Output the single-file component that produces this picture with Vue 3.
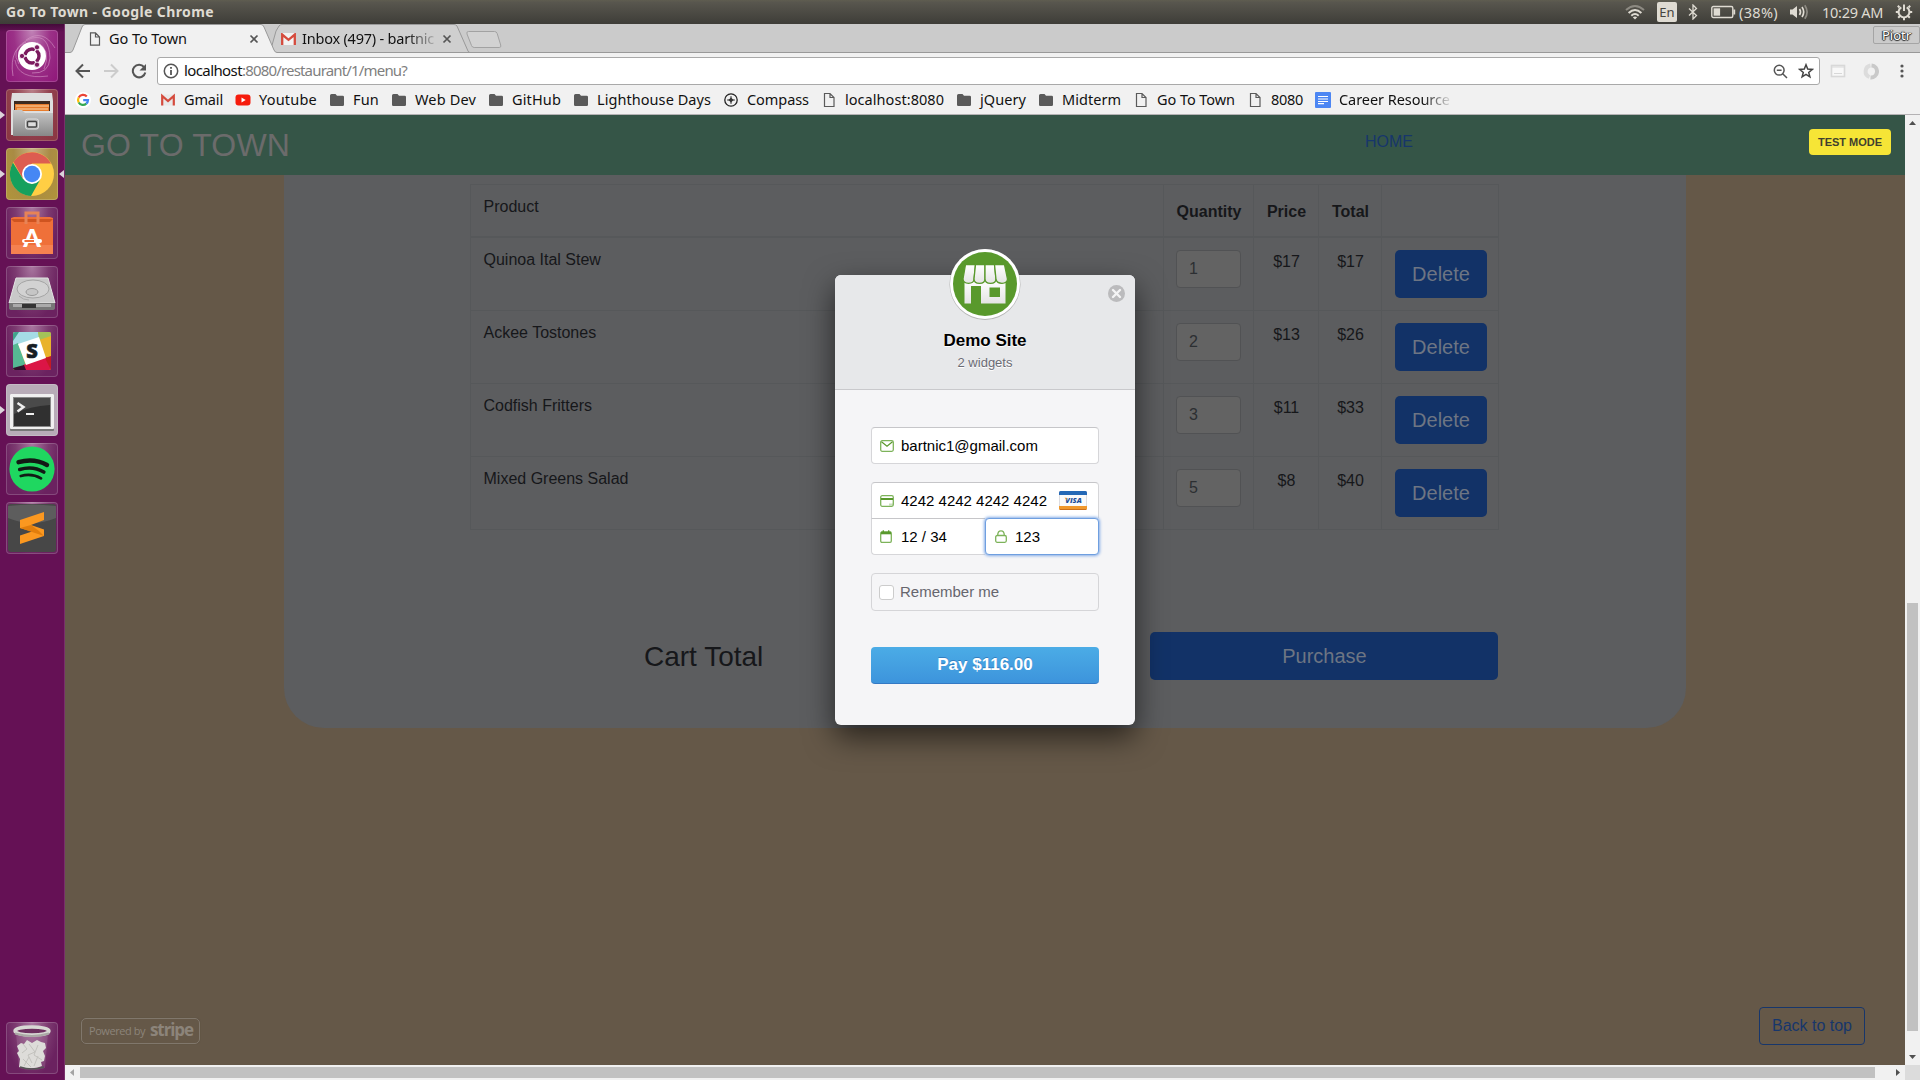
<script setup>
const vFit = {
  mounted(el, { value }) {
    const extra = value - el.getBoundingClientRect().width
    el.style.letterSpacing = extra / el.textContent.length + 'px'
  },
}

const launchers = [
  { id: 'dash' },
  { id: 'files', running: true },
  { id: 'chrome', running: true, focused: true },
  { id: 'software' },
  { id: 'disk' },
  { id: 'slack' },
  { id: 'terminal', running: true },
  { id: 'spotify' },
  { id: 'sublime' },
]

const bookmarks = [
  { icon: 'google', label: 'Google', width: 49 },
  { icon: 'gmail', label: 'Gmail', width: 39 },
  { icon: 'youtube', label: 'Youtube', width: 58 },
  { icon: 'folder', label: 'Fun', width: 26 },
  { icon: 'folder', label: 'Web Dev', width: 61 },
  { icon: 'folder', label: 'GitHub', width: 49 },
  { icon: 'folder', label: 'Lighthouse Days', width: 114 },
  { icon: 'compass', label: 'Compass', width: 62 },
  { icon: 'page', label: 'localhost:8080', width: 99 },
  { icon: 'folder', label: 'jQuery', width: 46 },
  { icon: 'folder', label: 'Midterm', width: 59 },
  { icon: 'page', label: 'Go To Town', width: 78 },
  { icon: 'page', label: '8080', width: 32 },
  { icon: 'doc', label: 'Career Resource', width: 111, faded: true },
]

const items = [
  { name: 'Quinoa Ital Stew', quantity: 1, price: 17 },
  { name: 'Ackee Tostones', quantity: 2, price: 13 },
  { name: 'Codfish Fritters', quantity: 3, price: 11 },
  { name: 'Mixed Greens Salad', quantity: 5, price: 8 },
]
</script>

<template>
  <div class="desktop">
    <header class="panel">
      <span v-fit="208" class="panel-title">Go To Town - Google Chrome</span>
      <div class="indicators">
        <svg class="wifi" width="20" height="16" viewBox="0 0 20 16" fill="none" stroke-width="2">
          <path d="M1 6Q10-2 19 6" stroke="#8d8a82" />
          <path d="M3.600 9Q10 3 16.400 9M6.300 11.800Q10 8.300 13.700 11.800" stroke="#dfdbd2" />
          <path d="M7.800 13.300 10 15.500l2.200-2.200Q10 11.500 7.800 13.300Z" fill="#dfdbd2" />
        </svg>
        <span class="lang">En</span>
        <svg class="bt" width="10" height="16" viewBox="0 0 10 16" fill="none" stroke="#dfdbd2" stroke-width="1.3">
          <path d="M1 4.500 8.500 11.500 5 15V1l3.500 3.500L1 11.500" />
        </svg>
        <svg class="battery" width="25" height="14" viewBox="0 0 25 14" fill="none" stroke="#dfdbd2" stroke-width="1.4">
          <rect x=".8" y="1.500" width="21" height="11" rx="1.500" />
          <path d="M23.300 4.500v5" stroke-width="1.800" />
          <rect x="2.600" y="3.300" width="6.500" height="7.400" fill="#dfdbd2" stroke="none" />
        </svg>
        <span v-fit="39" class="charge">(38%)</span>
        <svg class="sound" width="21" height="16" viewBox="0 0 21 16" fill="none" stroke-width="1.700">
          <path d="M1 5.500h2.500L8 2v12l-4.500-3.500H1Z" fill="#dfdbd2" />
          <path d="M10.500 5Q12.500 8 10.500 11M13 3Q16.400 8 13 13" stroke="#dfdbd2" />
          <path d="M15.800 1.200Q20.400 8 15.800 14.800" stroke="#8d8a82" />
        </svg>
        <span v-fit="61" class="clock">10:29 AM</span>
        <svg class="gear" width="18" height="18" viewBox="0 0 18 18" fill="none" stroke="#dfdbd2" stroke-width="2">
          <path d="M6.300 4.300a5.400 5.400 0 1 0 5.400 0M9 1.500V8" />
          <path d="M4.500 4.500 2.800 2.800M13.500 4.500l1.700-1.700M3.500 9H.8M14.500 9h2.700M5 13l-1.800 1.800M13 13l1.800 1.800M9 14.500v2.700" />
        </svg>
      </div>
    </header>

    <div class="workspace">
      <aside class="dock">
        <div v-for="app in launchers" :key="app.id" class="tile" :class="'tile-' + app.id">
          <i v-if="app.running" class="pip" />
          <i v-if="app.focused" class="pip pip-focus" />
          <svg v-if="app.id === 'dash'" width="52" height="52" viewBox="0 0 52 52" fill="none">
            <path d="M7 46Q2 17 26 8Q43 4 44 28Q43 44 26 43" stroke="#cf8bc0" stroke-width="1" opacity=".7" />
            <path d="M20 10Q37-2 49 18M9 30Q12 50 42 46M31 12Q46 20 38 39M13 34Q4 20 20 12" stroke="#d99ccb" opacity=".55" />
            <circle cx="26" cy="26" r="14" fill="#fff" />
            <circle cx="26" cy="26" r="7" stroke="#7b1a5e" stroke-width="3.400" />
            <path d="M26 26 17 26M26 26l5-8.500M26 26l5 8.500" stroke="#fff" stroke-width="1.300" />
            <g fill="#7b1a5e" stroke="#fff" stroke-width=".8"><circle cx="16" cy="26" r="2.600" /><circle cx="31" cy="17.300" r="2.600" /><circle cx="31" cy="34.700" r="2.600" /></g>
          </svg>
          <svg v-else-if="app.id === 'files'" width="52" height="52" viewBox="0 0 52 52">
            <defs><linearGradient id="cab" x2="0" y2="1"><stop stop-color="#c9c9c9" /><stop offset="1" stop-color="#888" /></linearGradient></defs>
            <path d="M6 4h40l1 8v34H5V12Z" fill="#dedede" />
            <path d="M8 12h36v10H8Z" fill="#3c2b20" />
            <path d="M9 15h34v7H9Z" fill="#e77c2c" /><path d="M10 17h33M11 20h31" stroke="#fbd6a6" />
            <path d="M7 21h9l3 3h28v23H7Z" fill="url(#cab)" />
            <rect x="19.500" y="30" width="13" height="10" rx="2" fill="#b5b5b5" stroke="#ddd" /><rect x="21.500" y="32.500" width="9" height="5.500" rx="1" fill="#ddd" stroke="#444" stroke-width="1.400" />
          </svg>
          <svg v-else-if="app.id === 'chrome'" width="52" height="52" viewBox="0 0 52 52">
            <circle cx="26" cy="26" r="22" fill="#ffce44" />
            <path d="M45 15.500A22 22 0 0 0 7.500 14L16.500 30 26 15.500Z" fill="#dd5d50" />
            <path d="M7 14.800A22 22 0 0 0 25 48l9-16-8 4-9-5Z" fill="#16a05d" />
            <circle cx="26" cy="26" r="10" fill="#fff" /><circle cx="26" cy="26" r="8.200" fill="#4687f4" />
          </svg>
          <svg v-else-if="app.id === 'software'" width="52" height="52" viewBox="0 0 52 52">
            <path d="M5 11 8 10h36l3 1v36H5Z" fill="#ef7039" /><path d="M5 38h42v9H5Z" fill="#f58150" />
            <path d="M5 12h42l-3 3H8Z" fill="#cf5420" />
            <path d="M20 17V6h12v11" fill="none" stroke="#e78356" stroke-width="3" />
            <text x="26" y="40" text-anchor="middle" font-size="25" font-weight="900" fill="#fff" font-family="Lato, sans-serif">A</text>
            <path d="M18 34h16" stroke="#fff" stroke-width="4" stroke-linecap="round" /><path d="M18.500 34H28" stroke="#ef7039" stroke-width="2" />
          </svg>
          <svg v-else-if="app.id === 'disk'" width="52" height="52" viewBox="0 0 52 52">
            <path d="M10 12h32l7 25H3Z" fill="#c9c9c9" stroke="#e4e4e4" /><path d="M3 37h46v5q0 2-3 2H6q-3 0-3-2Z" fill="#777" /><path d="M7 38h38v3H7Z" fill="#aaa" /><path d="M16 38h14v4H16Z" fill="#333" />
            <ellipse cx="27" cy="23" rx="16" ry="9" fill="#d2d2d2" stroke="#a5a5a5" /><ellipse cx="26" cy="26" rx="6" ry="3.500" fill="#c6c6c6" stroke="#999" /><path d="M13 30q4 4 10 4" fill="none" stroke="#aaa" />
          </svg>
          <svg v-else-if="app.id === 'slack'" width="52" height="52" viewBox="0 0 52 52">
            <clipPath id="sl"><rect x="7" y="7" width="38" height="38" rx="2" /></clipPath>
            <g clip-path="url(#sl)">
              <rect x="7" y="7" width="38" height="38" fill="#e9b32b" /><path d="M7 7h25l2 7L7 22Z" fill="#a5dce5" /><path d="M32 7h13v4l-12 4Z" fill="#a3c259" /><path d="M7 7h6L7 16Z" fill="#41a48c" />
              <path d="M7 20l5-2 8 23-13 4Z" fill="#56b993" /><path d="M17 40l23-8 5 3v10H19Z" fill="#db1546" /><path d="M39 33l6-2v14Z" fill="#c41924" /><path d="M7 43l11-3 2 5H7Z" fill="#33112b" />
              <path d="M12 19 33 12l7 21-20 7Z" fill="#fff" />
            </g>
            <text x="26" y="33" text-anchor="middle" font-size="20" font-weight="800" fill="#171d24" stroke="#171d24" stroke-width=".6" font-family="Open Sans, sans-serif">S</text>
          </svg>
          <svg v-else-if="app.id === 'terminal'" width="52" height="52" viewBox="0 0 52 52">
            <rect x="4" y="10" width="44" height="37" rx="1" fill="#777" /><rect x="4" y="10" width="44" height="35" rx="1" fill="#f0f0f0" /><rect x="7" y="13" width="38" height="30" fill="#888" /><rect x="8" y="14" width="36" height="28" fill="#303030" /><path d="M8 14h36v7Q24 22 8 30Z" fill="#4a4a4a" />
            <path d="m11.500 19 6 4-6 4.500" fill="none" stroke="#eee" stroke-width="2.500" /><path d="M20 30h8" stroke="#eee" stroke-width="2" />
          </svg>
          <svg v-else-if="app.id === 'spotify'" width="52" height="52" viewBox="0 0 52 52" fill="none" stroke="#121a15" stroke-linecap="round">
            <circle cx="26" cy="26" r="22.600" fill="#1fd760" stroke="none" />
            <path d="M12.500 19.200Q28 14.800 41 22" stroke-width="4.400" /><path d="M13.700 26.400Q27 22.500 37.800 29" stroke-width="3.600" /><path d="M14.800 33Q26 30 35 35.400" stroke-width="2.800" />
          </svg>
          <svg v-else width="52" height="52" viewBox="0 0 52 52">
            <rect x="2" y="2" width="48" height="48" rx="3" fill="#474747" /><path d="M2 4q24-3 48 0v12Q26 26 2 16Z" fill="#777" opacity=".45" />
            <path d="M14 18 38 10v8l-13 5 13 4.500V34L14 42v-8.500l12-4L14 26Z" fill="#fb9820" /><path d="m14 26 24 8-5-5-8-6Z" fill="#e27e0c" />
          </svg>
        </div>
        <div class="tile trash">
          <svg width="52" height="52" viewBox="0 0 52 52">
            <path d="M10 11 13 46q13 4 26 0l3-35Z" fill="#fff" opacity=".12" />
            <path d="m11 24 4-3 3 1 3-4 5 3 5-3 4 2 4 1 1 5-3 3 2 5-1 5-3 1 1 4q-8 4-23 1l1-8-3-6 2-2Z" fill="#dddcd9" />
            <path d="m17 22 4 5-5 4m7-9 6 8-7 3 4 8m6-18-4 10 8 5m-19-1 8 8m-7-1 5-9m9-1-4 10" stroke="#c3c2be" fill="none" />
            <path d="M14 45q12 4 24 0" stroke="#555" fill="none" stroke-width="1.500" />
            <ellipse cx="26" cy="9" rx="17" ry="4" fill="#6d305f" stroke="#d8d8d4" stroke-width="3.400" /><path d="M9 11.500q17 5 34 0" fill="none" stroke="#aaa9a5" stroke-width="2" />
          </svg>
        </div>
      </aside>

      <main class="browser">
        <div class="tabstrip">
          <svg class="tab-shapes" width="450" height="29" viewBox="0 0 450 29">
            <path d="M205 28.500 211 7 214 2Q215 .5 217 .5H389Q391 .5 392 2L403 27q.6 1.500 2 1.500" fill="#cfcfcf" stroke="#999" />
            <path d="M0 28.500H5Q7 28.500 8 26L17 3Q18 .5 20 .5H196Q198 .5 199 3L209 26Q210 28.500 212 28.500H450V30H0Z" fill="#f1f1f1" stroke="#999" />
            <path d="M403.500 7.500h26q2 0 2.700 2l3.500 11.500q.8 2.500-1.500 2.500h-25q-2 0-2.700-2L402 10q-.8-2.500 1.500-2.500Z" fill="#d2d2d2" stroke="#a2a2a2" />
          </svg>
          <div class="tab tab-active">
            <svg width="12" height="14" viewBox="0 0 12 14" fill="none" stroke="#5a5a5a" stroke-width="1.200"><path d="M1.500.8h5L10.500 5v8.200h-9ZM6.500.8V5h4" /></svg>
            <span v-fit="78">Go To Town</span>
            <svg class="x" width="10" height="10" viewBox="0 0 10 10"><path d="m1.500 1.500 7 7m0-7-7 7" stroke="#555" stroke-width="1.700" /></svg>
          </div>
          <div class="tab tab-mail">
            <svg width="15" height="12" viewBox="0 0 15 12"><path d="M1 0h13v12H1Z" fill="#f2f2f2" /><path d="M1.200 12V1.500l6.300 5.300 6.300-5.300V12" fill="none" stroke="#d54b3d" stroke-width="2.300" /></svg>
            <span class="mail-title"><span v-fit="132">Inbox (497) - bartnic</span></span>
            <svg class="x" width="10" height="10" viewBox="0 0 10 10"><path d="m1.500 1.500 7 7m0-7-7 7" stroke="#555" stroke-width="1.700" /></svg>
          </div>
          <span class="profile">Piotr</span>
        </div>

        <div class="toolbar">
          <svg class="nav-icon" width="16" height="16" viewBox="0 0 16 16" fill="none" stroke="#555" stroke-width="2"><path d="M15 8H2M8 1.500 1.500 8 8 14.500" /></svg>
          <svg class="nav-icon" width="16" height="16" viewBox="0 0 16 16" fill="none" stroke="#ccc" stroke-width="2"><path d="M1 8h13M8 1.500 14.500 8 8 14.500" /></svg>
          <svg class="nav-icon" width="16" height="16" viewBox="0 0 16 16"><path d="M13 4A6.300 6.300 0 1 0 14.300 9.500" fill="none" stroke="#555" stroke-width="2" /><path d="M15 1v6.500H8.500Z" fill="#555" /></svg>
          <div class="omnibox">
            <svg width="16" height="16" viewBox="0 0 16 16" fill="none" stroke="#555" stroke-width="1.500"><circle cx="8" cy="8" r="6.700" /><path d="M8 7v5M8 4v1.700" stroke-width="1.800" /></svg>
            <span class="url"><b v-fit="58">localhost</b><span v-fit="165">:8080/restaurant/1/menu?</span></span>
            <svg class="glass" width="15" height="15" viewBox="0 0 15 15" fill="none" stroke="#555" stroke-width="1.500"><circle cx="6.200" cy="6.200" r="4.900" /><path d="M3.800 6.200h4.800M9.700 9.700 14 14" stroke-width="1.500" /></svg>
            <svg width="16" height="16" viewBox="0 0 16 16" fill="none" stroke="#444" stroke-width="1.500"><path d="m8 1.800 1.700 4.300 4.600.3-3.600 3 1.200 4.500L8 11.400l-3.900 2.500 1.200-4.500-3.600-3 4.600-.3Z" /></svg>
          </div>
          <svg class="ext" width="16" height="14" viewBox="0 0 16 14" fill="none" stroke="#d8d8d8"><rect x="1.500" y="1.500" width="13" height="11" stroke-width="1.600" fill="#f8f8f8" /><path d="M2 3h12M4 9.500h8" /></svg>
          <svg class="ext2" width="17" height="17" viewBox="0 0 17 17" fill="none" stroke-width="4"><path d="M9.500 2.500a6 6 0 0 1-1 12" stroke="#c9c9c9" /><path d="M8.500 2.500a6 6 0 0 0-1 11.500" stroke="#dcdcdc" /></svg>
          <svg class="dots" width="4" height="14" viewBox="0 0 4 14" fill="#555"><circle cx="2" cy="2" r="1.600" /><circle cx="2" cy="7" r="1.600" /><circle cx="2" cy="12" r="1.600" /></svg>
        </div>

        <div class="bookmarks">
          <div v-for="(mark, i) in bookmarks" :key="i" class="bookmark">
            <svg v-if="mark.icon === 'google'" width="16" height="16" viewBox="0 0 16 16"><circle cx="8" cy="8" r="8" fill="#fff" /><g fill="none" stroke-width="2.200"><path d="M11.800 4.600A5 5 0 0 0 3.700 5.500" stroke="#ea4335" /><path d="M3.700 5.500a5 5 0 0 0 0 5" stroke="#fbbc05" /><path d="M3.700 10.500a5 5 0 0 0 7.600 1.200" stroke="#34a853" /><path d="M11.300 11.700A5 5 0 0 0 13 8.100H8.200" stroke="#4285f4" /></g></svg>
            <svg v-else-if="mark.icon === 'gmail'" width="16" height="16" viewBox="0 0 16 16"><path d="M1.500 2.500h13v11h-13Z" fill="#e9e9e9" /><path d="M2.200 13.500V4L8 9l5.800-5v9.500" fill="none" stroke="#d54b3d" stroke-width="2.200" /></svg>
            <svg v-else-if="mark.icon === 'youtube'" width="16" height="16" viewBox="0 0 16 16"><rect x=".5" y="2.500" width="15" height="11" rx="3" fill="#f61c0d" /><path d="M6.500 5.500v5L10.700 8Z" fill="#fff" /></svg>
            <svg v-else-if="mark.icon === 'folder'" width="16" height="16" viewBox="0 0 16 16"><path d="M2.500 2h4L8 3.700h5.700q1.300 0 1.300 1.300v7.700q0 1.300-1.300 1.300H2.300Q1 14 1 12.700V3.500Q1 2 2.500 2Z" fill="#5a5a5a" /></svg>
            <svg v-else-if="mark.icon === 'compass'" width="16" height="16" viewBox="0 0 16 16" fill="none" stroke="#222"><circle cx="8" cy="8" r="6.200" stroke-width="1.300" /><path d="M8 4.200v7.600M4.200 8h7.600" stroke-width="1" /><path d="m8 5.500 2.500 2.500L8 10.500 5.500 8Z" fill="#333" stroke="none" /></svg>
            <svg v-else-if="mark.icon === 'page'" width="16" height="16" viewBox="0 0 16 16" fill="none" stroke="#5a5a5a" stroke-width="1.200"><path d="M3.500 1.500H9l4 4v9H3.500ZM9 1.500v4h4" /></svg>
            <svg v-else width="16" height="16" viewBox="0 0 16 16"><rect width="16" height="16" rx="1" fill="#4c86f3" /><path d="M3 4.500h10M3 7h10M3 9.500h10M3 11.700h6" stroke="#fff" stroke-width="1.200" /></svg>
            <span v-fit="mark.width" :class="{ faded: mark.faded }">{{ mark.label }}</span>
          </div>
        </div>

        <div class="viewport">
          <div class="page">
            <nav class="site-nav">
              <span class="brand"><span v-fit="209">GO TO TOWN</span></span>
              <a class="home">HOME</a>
            </nav>
            <section class="cart">
              <div class="grid">
                <div class="row head">
                  <div class="cell name">Product</div>
                  <div class="cell">Quantity</div>
                  <div class="cell">Price</div>
                  <div class="cell">Total</div>
                  <div class="cell"></div>
                </div>
                <div v-for="item in items" :key="item.name" class="row">
                  <div class="cell name">{{ item.name }}</div>
                  <div class="cell"><div class="qty">{{ item.quantity }}</div></div>
                  <div class="cell">${{ item.price }}</div>
                  <div class="cell">${{ item.price * item.quantity }}</div>
                  <div class="cell"><button class="btn">Delete</button></div>
                </div>
              </div>
              <div class="checkout">
                <span class="cart-total">Cart Total</span>
                <button class="btn purchase">Purchase</button>
              </div>
            </section>

            <span class="test-mode">TEST MODE</span>
            <div class="powered"><span v-fit="56">Powered by</span><b v-fit="43">stripe</b></div>
            <a class="to-top">Back to top</a>

            <div class="modal">
              <div class="modal-head">
                <svg class="logo" width="74" height="74" viewBox="0 0 74 74">
                  <defs><linearGradient id="shop" x2="0" y2="1"><stop stop-color="#fff" /><stop offset="1" stop-color="#e4e4e4" /></linearGradient></defs>
                  <circle cx="37" cy="37.500" r="35.500" fill="#b5b5b5" /><circle cx="37" cy="37" r="35" fill="#fff" /><circle cx="37" cy="37" r="32" fill="#59992c" />
                  <path d="M16.500 33h41v23.500H33V39H23v17.500h-6.500ZM41.500 40.500v9.500H52v-9.500Z" fill="url(#shop)" fill-rule="evenodd" />
                  <g fill="url(#shop)" stroke="#59992c" stroke-width="1.300">
                    <path d="M17.500 17.500H27.500L26 32.500q-.5 3.800-5.500 3.800T15 32Z" />
                    <path d="M27.500 17.500H37V32q0 4.300-5.500 4.300T26 32Z" />
                    <path d="M37 17.500h9.500L48 32q0 4.300-5.500 4.300T37 32Z" />
                    <path d="M46.500 17.500h10L59.500 32q-.5 4.300-5.500 4.300T48 32.500Z" />
                  </g>
                </svg>
                <svg class="close" width="17" height="17" viewBox="0 0 17 17"><circle cx="8.500" cy="8.500" r="8.500" fill="#bbbbbd" /><path d="m5 5 7 7m0-7-7 7" stroke="#f3f3f4" stroke-width="2.400" stroke-linecap="round" /></svg>
                <h2>Demo Site</h2>
                <p>2 widgets</p>
              </div>
              <div class="modal-body">
                <div class="field">
                  <svg width="14" height="12" viewBox="0 0 14 12" fill="none"><rect x=".7" y=".7" width="12.600" height="10.600" rx="1.500" stroke="#7db35a" stroke-width="1.300" /><path d="m1.500 1.800 5.500 4.400 5.500-4.400" stroke="#59992c" stroke-width="1.200" /></svg>
                  <span>bartnic1@gmail.com</span>
                </div>
                <div class="card-fields">
                  <div class="field number">
                    <svg width="14" height="12" viewBox="0 0 14 12" fill="none" stroke="#7db35a"><rect x=".7" y=".7" width="12.600" height="10.600" rx="1.500" stroke-width="1.300" /><path d="M1 4h12" stroke="#59992c" stroke-width="2" /><path d="M10 8.500v2M12 8.500v2" stroke-width=".8" /></svg>
                    <span>4242 4242 4242 4242</span>
                    <svg class="visa" width="28" height="19" viewBox="0 0 28 19">
                      <rect width="28" height="19" rx="1.500" fill="#cfcfd4" /><rect x=".7" y="4" width="26.600" height="11" fill="#fafafa" /><path d="M0 4V1.500Q0 0 1.500 0h25Q28 0 28 1.500V4Z" fill="#2468b6" /><path d="M0 15h28v2.500q0 1.500-1.500 1.500h-25Q0 19 0 17.500Z" fill="#f0982c" /><path d="M1 18.500h26" stroke="#cc701a" />
                      <text x="14.500" y="12.300" text-anchor="middle" font-family="Open Sans, sans-serif" font-size="7.500" font-weight="800" font-style="italic" fill="#1c4f9c">VISA</text><path d="m5.500 6.800 2 0 .6 2.500Z" fill="#ee9b31" />
                    </svg>
                  </div>
                  <div class="card-row">
                    <div class="field">
                      <svg class="cal" width="12" height="13" viewBox="0 0 12 13" fill="none"><rect x=".7" y="2" width="10.600" height="10.300" rx="1.200" stroke="#7db35a" stroke-width="1.300" /><path d="M1 3h10" stroke="#59992c" stroke-width="2.600" /><path d="M3.300.3v2M8.700.3v2" stroke="#59992c" stroke-width="1.300" /></svg>
                      <span>12 / 34</span>
                    </div>
                    <div class="field cvc">
                      <svg width="12" height="13" viewBox="0 0 12 13" fill="none" stroke="#7db35a" stroke-width="1.300"><rect x=".7" y="5.500" width="10.600" height="6.800" rx="1.500" /><path d="M2.700 5.500Q2.700.8 6 .8t3.300 4.700" /></svg>
                      <span>123</span>
                    </div>
                  </div>
                </div>
                <div class="remember"><i class="check" /><span>Remember me</span></div>
                <button class="pay">Pay $116.00</button>
              </div>
            </div>
          </div>
          <div class="vscroll">
            <svg width="15" height="950" viewBox="0 0 15 950"><path d="M4 10h7L7.500 6Z" fill="#505050" /><path d="M4 940h7l-3.500 4Z" fill="#505050" /><rect x="2" y="488" width="11" height="428" fill="#c1c1c1" /></svg>
          </div>
        </div>
        <div class="hscroll">
          <svg width="1840" height="15" viewBox="0 0 1840 15"><path d="M9 4v7L5 7.500Z" fill="#a3a3a3" /><path d="M1831 4v7l4-3.500Z" fill="#505050" /><rect x="15" y="2" width="1795" height="11" fill="#c1c1c1" /></svg>
          <i class="corner" />
        </div>
      </main>
    </div>
  </div>
</template>

<style>
body { margin: 0; overflow: hidden; }
</style>

<style scoped>
* { box-sizing: border-box; }
svg { display: block; flex: none; }
button { border: 0; padding: 0; font: inherit; }
.desktop { width: 1920px; height: 1080px; display: flex; flex-direction: column; font-family: "Noto Sans", sans-serif; font-size: 14.5px; color: #111; white-space: nowrap; overflow: hidden; }
.panel { height: 24px; flex: none; display: flex; align-items: center; justify-content: space-between; padding: 0 7px 0 6px; background: linear-gradient(#5f5d50, #58564e 10%, #3e3d38); color: #dfdbd2; line-height: 24px; }
.panel-title { font-weight: 700; font-size: 14px; }
.indicators { display: flex; align-items: center; }
.wifi { margin-right: 12px; }
.lang { width: 20px; height: 20px; border-radius: 2px; background: #dfdbd2; color: #45443f; font-size: 13px; line-height: 20px; text-align: center; margin-right: 11px; }
.bt { margin-right: 13px; }
.battery { margin-right: 3px; }
.charge { margin-right: 11px; }
.sound { margin-right: 12px; }
.clock { margin-right: 12px; }
.workspace { flex: 1; display: flex; min-height: 0; }
.dock { width: 65px; flex: none; display: flex; flex-direction: column; gap: 7px; padding: 6px 0 6px 6px; background: linear-gradient(#440a3a, #651155 8px); border-right: 1px solid #78306a; }
.tile { position: relative; width: 52px; height: 52px; flex: none; border-radius: 4px; background: radial-gradient(ellipse at 50% 0, #a977a0, #7c3a70 45%, #6b2260 75%); box-shadow: inset 0 0 0 1px rgba(255, 255, 255, .18); }
.tile-dash { background: radial-gradient(ellipse at 50% 0, #c183b7, #9b3187 50%, #8f1679); }
.tile-files { background: radial-gradient(ellipse at 50% 0, #b98089, #91404d 50%, #8a3541); }
.tile-chrome { background: radial-gradient(ellipse at 50% 0, #c8b183, #a98b44 50%, #b1953a); }
.tile-terminal { background: #b8acb8; }
.trash { margin-top: auto; }
.pip { position: absolute; left: -6px; top: 22px; border: 4px solid transparent; border-left: 5px solid #dcd3db; border-right: 0; }
.pip-focus { left: 53px; border-left: 0; border-right: 5px solid #dcd3db; }
.browser { width: 1855px; display: flex; flex-direction: column; }
.tabstrip { position: relative; height: 29px; flex: none; display: flex; background: #cbcbcb; border-bottom: 1px solid #999; }
.tab-shapes { position: absolute; left: 0; top: 0; }
.tab { position: relative; display: flex; align-items: center; height: 29px; line-height: 29px; }
.tab-active { margin-left: 24px; width: 192px; }
.tab-active span { margin-left: 8px; }
.tab-active .x { margin-left: 62px; }
.mail-title { width: 134px; margin-left: 6px; -webkit-mask-image: linear-gradient(90deg, #000 78%, transparent 103%); mask-image: linear-gradient(90deg, #000 78%, transparent 103%); }
.mail-title span, .brand span, .faded, .url span, .url b { display: inline-block; }
.tab-mail .x { margin-left: 6px; }
.profile { width: 47px; height: 18px; margin: 2px 0 0 auto; border: 1px solid #a5a5a5; border-radius: 2px; color: #fff; font-size: 13px; line-height: 16px; text-align: center; text-shadow: 0 0 1px #222, 1px 0 1px #333, -1px 0 1px #333, 0 1px 1px #333; }
.toolbar { height: 32px; flex: none; display: flex; align-items: center; padding: 4px 16px 0 10px; background: #f1f1f1; }
.nav-icon { margin-right: 12px; }
.nav-icon:nth-child(3) { margin-right: 10px; }
.omnibox { width: 1663px; height: 28px; flex: none; display: flex; align-items: center; padding: 0 5px; border: 1px solid #a9a9a9; border-radius: 3px; background: #fff; font-size: 15px; line-height: 24px; }
.url { margin: 0 auto 2px 5px; color: #808080; }
.url b { font-weight: 400; color: #111; }
.glass { margin-right: 10px; }
.ext { margin-left: 10px; }
.ext2 { margin-left: 16px; }
.dots { margin-left: auto; }
.bookmarks { height: 30px; flex: none; display: flex; align-items: center; gap: 12px; padding-left: 10px; background: #f1f1f1; border-bottom: 1px solid #b4b2b4; }
.bookmark { display: flex; align-items: center; gap: 8px; line-height: 26px; }
.bookmark span { font-size: 14.5px; margin-bottom: 2px; }
.faded { -webkit-mask-image: linear-gradient(90deg, #000 75%, transparent 103%); mask-image: linear-gradient(90deg, #000 75%, transparent 103%); }
.viewport { flex: 1; display: flex; min-height: 0; }
.page { position: relative; width: 1840px; background: #655848; font-family: "Liberation Sans", Arial, sans-serif; font-size: 16px; color: #16171a; overflow: hidden; }
.site-nav { height: 60px; display: flex; background: #355547; }
.brand { width: 1284px; padding-left: 16px; font-size: 32px; line-height: 60px; color: #6b6b6b; }
.home { padding-left: 16px; line-height: 53px; color: #17366b; }
.cart { width: 1402px; height: 553px; margin-left: 219px; padding: 9px 187px 0 186px; border-radius: 0 0 40px 40px; background: #5c5d5f; }
.grid { border-right: 1px solid #56585a; border-bottom: 1px solid #56585a; }
.row { display: grid; grid-template-columns: 693px 90px 65px 63px 117px; height: 73px; border-top: 1px solid #56585a; line-height: 24px; text-align: center; }
.cell { padding: 12px 11px 12px 12px; border-left: 1px solid #56585a; }
.row:nth-child(2) { height: 74px; border-top-width: 2px; }
.name { text-align: left; padding: 10px 12px; text-indent: .5px; }
.head { height: 52px; font-weight: 700; }
.head .cell { padding: 15px 0 0 1px; }
.head .name { font-weight: 400; padding: 10px 12px 0; }
.qty { width: 65px; height: 38px; padding: 6px 12px; border: 1px solid #515254; border-radius: 4px; background: #636363; color: #2c2f32; line-height: 24px; text-align: left; }
.btn { width: 92px; height: 48px; border-radius: 5px; background: #123267; color: #6d7583; font-size: 20px; line-height: 48px; text-indent: 1px; }
.checkout { display: flex; align-items: center; justify-content: space-between; margin-top: 102px; padding-left: 174px; }
.cart-total { font-size: 28px; padding-top: 2px; }
.purchase { width: 348px; margin-right: 1px; }
.test-mode { position: absolute; right: 14px; top: 14px; width: 82px; height: 26px; border-radius: 4px; background: #f6e536; color: #40402e; font-size: 11px; font-weight: 700; line-height: 26px; text-align: center; }
.powered { position: absolute; left: 16px; top: 903px; width: 119px; height: 26px; display: flex; align-items: center; gap: 5px; padding-left: 7px; border: 1px solid #80776c; border-radius: 5px; box-shadow: 0 0 1px #4e4539; color: #8c847a; font-family: "Open Sans", sans-serif; font-size: 11px; line-height: 24px; }
.powered b { font-size: 17px; line-height: 20px; position: relative; top: -1px; font-weight: 700; }
.to-top { position: absolute; left: 1694px; top: 892px; width: 106px; height: 38px; border: 1px solid #17366b; border-radius: 4px; color: #17366b; line-height: 36px; text-align: center; }
.modal { position: absolute; left: 770px; top: 160px; width: 300px; height: 450px; border-radius: 6px; background: #f5f5f7; box-shadow: 0 12px 30px rgba(0, 0, 0, .6); }
.modal-head { position: relative; height: 115px; padding-top: 54px; border-radius: 6px 6px 0 0; border-bottom: 1px solid #c9c9cc; background: #e7e8ea; text-align: center; }
.logo { position: absolute; left: 113px; top: -28px; }
.close { position: absolute; left: 273px; top: 10px; }
h2 { margin: 0; font-size: 17px; line-height: 24px; color: #000; text-shadow: 0 1px 0 #fff; }
p { margin: 1px 0 0; font-size: 13px; line-height: 17px; color: #6b6b74; text-shadow: 0 1px 0 #fff; }
.modal-body { padding: 37px 36px 0; font-size: 15px; color: #000; }
.field { display: flex; align-items: center; height: 37px; padding-left: 8px; border: 1px solid #d6d6d9; border-top-color: #c6c6c9; border-radius: 4px; background: #fff; }
.field span { margin-left: 7px; }
.card-fields { margin-top: 18px; }
.number { border-radius: 4px 4px 0 0; border-bottom: 0; height: 36px; }
.visa { margin-left: 12px; }
.card-row { display: flex; }
.card-row .field { width: 114px; border-radius: 0 0 0 4px; border-right: 0; }
.card-row .field span { margin-left: 9px; }
.card-row .cvc { padding-left: 9px; border: 1px solid #6f9fe0; border-radius: 4px; box-shadow: 0 0 3px 1px #85ace6; }
.card-row .cvc span { margin-left: 8px; }
.remember { display: flex; align-items: center; height: 38px; margin-top: 18px; padding-left: 7px; border: 1px solid #d5d5d8; border-radius: 4px; color: #66666e; }
.remember span { padding-bottom: 2px; }
.check { width: 15px; height: 15px; margin-right: 6px; border: 1px solid #ccc; border-radius: 3px; background: #fff; }
.pay { display: block; width: 228px; height: 37px; margin-top: 36px; border-radius: 4px; border-bottom: 1px solid #3479c4; background: linear-gradient(#4bace6, #3d94dc); color: #fff; font-size: 17px; font-weight: 700; text-shadow: 0 -1px 0 rgba(30, 90, 160, .5); }
.vscroll { width: 15px; background: #f1f1f1; }
.hscroll { height: 15px; flex: none; display: flex; background: #f1f1f1; }
.corner { flex: 1; background: #dcdcdc; }
</style>
